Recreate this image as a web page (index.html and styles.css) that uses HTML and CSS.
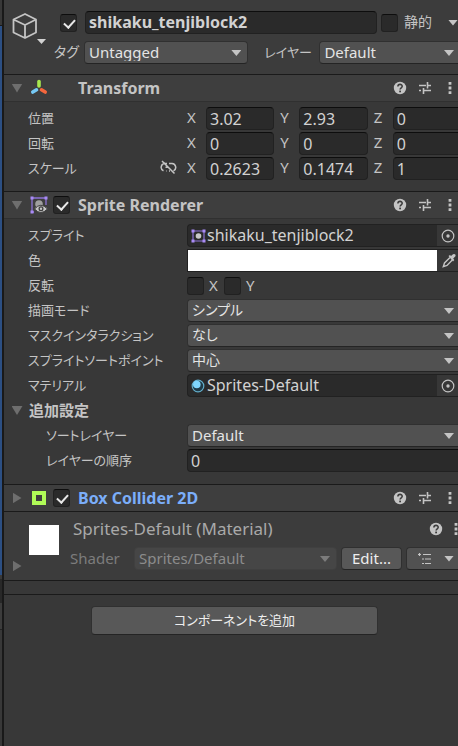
FILE: index.html
```html
<!DOCTYPE html>
<html lang="ja">
<head>
<meta charset="utf-8">
<meta name="viewport" content="width=device-width, initial-scale=1">
<title>Inspector</title>
<link rel="stylesheet" href="styles.css">
</head>
<body>
<svg class="defs" aria-hidden="true">
  <symbol id="help" viewBox="0 0 14 14"><circle cx="7" cy="7" r="6.2" fill="#c4c4c4"/><path d="M4.9 5.5C4.9 2.6 9.2 2.8 9.2 5.3C9.2 6.8 7.1 6.8 7.1 8.6" fill="none" stroke="#3c3c3c" stroke-width="1.6"/><rect x="6.2" y="9.6" width="1.8" height="1.7" fill="#3c3c3c"/></symbol>
  <symbol id="preset" viewBox="0 0 14 14"><path d="M1 4.5H8M10 4.5H13M9.500 1V7.500M1 9.500H3M6 9.500H13M5.500 7V13" fill="none" stroke="#c4c4c4" stroke-width="1.6"/></symbol>
  <symbol id="more" viewBox="0 0 4 14"><path d="M.6 1h2.8v2.8H.6zM.6 5.6h2.8v2.8H.6zM.6 10.2h2.8V13H.6z" fill="#c4c4c4"/></symbol>
  <symbol id="picker" viewBox="0 0 14 14"><circle cx="7" cy="7" r="5.8" fill="none" stroke="#c4c4c4" stroke-width="1.2"/><circle cx="7" cy="7" r="1.7" fill="#c4c4c4"/></symbol>
</svg>
<div class="window">
  <div class="edge"><i class="edge-top"></i><i class="edge-selected"></i><i class="edge-tabs"></i><i class="edge-bar"></i><i class="edge-body"></i></div>
  <main class="inspector">
    <header class="object">
      <button class="object-icon" aria-label="アイコンを選択">
        <svg width="34" height="34" viewBox="0 0 34 34"><path d="M13 3L24 8.500V21.500L13 27L1.500 21.500V8.500ZM1.500 8.500L13 14L24 8.500M13 14V27" fill="none" stroke="#c4c4c4" stroke-width="1.800" stroke-linejoin="round"/><path d="M25 28h9l-4.500 5z" fill="#d2d2d2"/></svg>
      </button>
      <div class="object-fields">
        <div class="object-row">
          <input class="check" type="checkbox" checked aria-label="アクティブ">
          <input class="field name" type="text" value="shikaku_tenjiblock2" aria-label="名前">
          <input class="check" type="checkbox" id="static">
          <label class="static-label" for="static">静的</label>
          <button class="caret-button" aria-label="静的オプション"></button>
        </div>
        <div class="object-row">
          <label class="tag-label" for="tag">タグ</label>
          <div class="select tag"><select id="tag"><option>Untagged</option></select></div>
          <label class="layer-label" for="layer">レイヤー</label>
          <div class="select layer bleed"><select id="layer"><option>Default</option></select></div>
        </div>
      </div>
    </header>

    <section>
      <div class="head">
        <button class="fold open" aria-label="折りたたむ"></button>
        <svg class="head-icon" width="18" height="18" viewBox="0 0 18 18"><path d="M9 2.500V7" stroke="#a8e84e" stroke-width="3.600" stroke-linecap="round"/><path d="M6.500 10.800L2.800 13" stroke="#76c9f5" stroke-width="3.600" stroke-linecap="round"/><path d="M11.500 10.800L15.200 13" stroke="#f5673d" stroke-width="3.600" stroke-linecap="round"/></svg>
        <span class="check-space"></span>
        <h2>Transform</h2>
        <button class="tool" aria-label="ヘルプ"><svg><use href="#help"/></svg></button><button class="tool" aria-label="プリセット"><svg><use href="#preset"/></svg></button><button class="tool more" aria-label="メニュー"><svg><use href="#more"/></svg></button>
      </div>
      <div class="body">
        <div class="row"><span class="label">位置</span><div class="axes">
          <label class="axis">X<input class="field" value="3.02"></label><label class="axis">Y<input class="field" value="2.93"></label><label class="axis">Z<input class="field" value="0"></label></div></div>
        <div class="row"><span class="label">回転</span><div class="axes">
          <label class="axis">X<input class="field" value="0"></label><label class="axis">Y<input class="field" value="0"></label><label class="axis">Z<input class="field" value="0"></label></div></div>
        <div class="row"><span class="label">スケール<button class="link" aria-label="比率を固定"><svg width="17" height="15" viewBox="0 0 17 15"><path d="M7 3.500H5A3.800 3.800 0 0 0 3.500 10.800M9 3.500H12A3.900 3.900 0 0 1 13.500 10.900M10 11H9M7 11H6.500M5.500 7.300H8M2 1L14.500 13.500" fill="none" stroke="#c4c4c4" stroke-width="1.500"/></svg></button></span><div class="axes">
          <label class="axis">X<input class="field" value="0.2623"></label><label class="axis">Y<input class="field" value="0.1474"></label><label class="axis">Z<input class="field" value="1"></label></div></div>
      </div>
    </section>

    <section>
      <div class="head">
        <button class="fold open" aria-label="折りたたむ"></button>
        <svg class="head-icon" width="18" height="18" viewBox="0 0 18 18"><path d="M2 2H16V9M2 2V16H4" fill="none" stroke="#8d73d6" stroke-width="1.300"/><path d="M.5.500h3v3h-3zM14.500.500h3v3h-3zM.5 14.500h3v3h-3z" fill="#a98bf5"/><circle cx="9" cy="8" r="3.800" fill="#a0a0a0"/><path d="M4.500 13Q10.800 5.500 17.500 13Q10.800 20 4.500 13Z" fill="#c4c4c4" stroke="#3e3e3e"/><circle cx="11" cy="12.800" r="2.500" fill="#3e3e3e"/><circle cx="11" cy="12.800" r="1.200" fill="#c4c4c4"/></svg>
        <input class="check" type="checkbox" checked aria-label="Sprite Renderer を有効化">
        <h2>Sprite Renderer</h2>
        <button class="tool" aria-label="ヘルプ"><svg><use href="#help"/></svg></button><button class="tool" aria-label="プリセット"><svg><use href="#preset"/></svg></button><button class="tool more" aria-label="メニュー"><svg><use href="#more"/></svg></button>
      </div>
      <div class="body long">
        <div class="row"><span class="label">スプライト</span><div class="object-ref"><svg width="15" height="14" viewBox="0 0 15 14"><path d="M2 2H13V12H2Z" fill="none" stroke="#8d73d6" stroke-width="1.200"/><path d="M.5.500h3v3h-3zM11.500.500h3v3h-3zM.5 10.500h3v3h-3zM11.500 10.500h3v3h-3z" fill="#a98bf5"/><circle cx="7.500" cy="7" r="2.800" fill="#c8c8c8"/></svg><span>shikaku_tenjiblock2</span><button class="pick" aria-label="スプライトを選択"><svg><use href="#picker"/></svg></button></div></div>
        <div class="row"><span class="label">色</span><div class="color"><button class="swatch" aria-label="色を選択"></button><button class="dropper" aria-label="スポイト"><svg width="14" height="15" viewBox="0 0 14 15"><path d="M8 4.500L2.500 10L1.300 13.700L5 12.500L10.300 7" fill="none" stroke="#c4c4c4" stroke-width="1.400"/><path d="M6.500 3L8 2L9 3L11 1.200Q12.500.500 13.300 1.500Q14 2.700 13 3.800L11.200 5.600L12.300 7L11 8.500Z" fill="#c4c4c4"/></svg></button></div></div>
        <div class="row"><span class="label">反転</span><div class="flip"><input class="check" type="checkbox" id="flipx"><label for="flipx">X</label><input class="check" type="checkbox" id="flipy"><label for="flipy">Y</label></div></div>
        <div class="row"><label class="label" for="mode">描画モード</label><div class="select bleed"><select class="kana" id="mode"><option>シンプル</option></select></div></div>
        <div class="row"><label class="label" for="mask">マスクインタラクション</label><div class="select bleed"><select class="kana" id="mask"><option>なし</option></select></div></div>
        <div class="row"><label class="label" for="point">スプライトソートポイント</label><div class="select bleed"><select class="kana" id="point"><option>中心</option></select></div></div>
        <div class="row"><span class="label">マテリアル</span><div class="object-ref"><svg width="15" height="14" viewBox="0 0 15 14"><circle cx="7" cy="7" r="5.800" fill="#1f3a47" stroke="#62aecb" stroke-width="1.200"/><circle cx="5.800" cy="5.500" r="3.800" fill="#7fd6fd"/></svg><span>Sprites-Default</span><button class="pick" aria-label="マテリアルを選択"><svg><use href="#picker"/></svg></button></div></div>
        <div class="row group"><button class="fold open" aria-label="折りたたむ"></button><h3>追加設定</h3></div>
        <div class="row"><label class="label nested" for="sort">ソートレイヤー</label><div class="select bleed"><select id="sort"><option>Default</option></select></div></div>
        <div class="row"><label class="label nested" for="order">レイヤーの順序</label><input class="field order" id="order" value="0"></div>
      </div>
    </section>

    <section>
      <div class="head closed">
        <button class="fold" aria-label="展開"></button>
        <svg class="head-icon" width="18" height="18" viewBox="0 0 18 18"><path d="M4 4H14V14H4Z" fill="none" stroke="#b0fb57" stroke-width="4"/></svg>
        <input class="check" type="checkbox" checked aria-label="Box Collider 2D を有効化">
        <h2 class="added">Box Collider 2D</h2>
        <button class="tool" aria-label="ヘルプ"><svg><use href="#help"/></svg></button><button class="tool" aria-label="プリセット"><svg><use href="#preset"/></svg></button><button class="tool more" aria-label="メニュー"><svg><use href="#more"/></svg></button>
      </div>
    </section>

    <section class="material">
      <div class="preview-column"><div class="preview"></div><button class="fold" aria-label="展開"></button></div>
      <div class="material-main">
        <div class="material-title"><h2>Sprites-Default (Material)</h2><button class="tool" aria-label="ヘルプ"><svg><use href="#help"/></svg></button><button class="tool more" aria-label="メニュー"><svg><use href="#more"/></svg></button></div>
        <div class="shader"><label for="shader">Shader</label><div class="select disabled"><select id="shader" disabled><option>Sprites/Default</option></select></div><button class="button">Edit...</button><button class="button list" aria-label="シェーダーメニュー"><svg width="14" height="12" viewBox="0 0 14 12"><path d="M0 1.500H3M1.500 0V3M5 1.500H13M4 6H6M7 6H13M4 10.500H6M7 10.500H13" fill="none" stroke="#c4c4c4" stroke-width="1.200"/></svg></button></div>
      </div>
    </section>

    <div class="divider"></div>
    <footer><button class="button add">コンポーネントを追加</button></footer>
  </main>
</div>
</body>
</html>
```
FILE: styles.css
```css
* { box-sizing: border-box; }

body {
  margin: 0;
  background: #383838;
  color: #c4c4c4;
  font: 15px/20px "Noto Sans", "Noto Sans CJK JP", sans-serif;
  font-feature-settings: "palt";
}

button, input, select {
  margin: 0;
  padding: 0;
  border: 0;
  background: none;
  color: inherit;
  font: inherit;
  font-feature-settings: inherit;
}

h2, h3 { margin: 0; }
h2 { font-size: 16px; }
h3 { font-size: 15px; }
svg { display: block; flex: none; }
.defs { position: absolute; width: 0; height: 0; }

.window { display: flex; min-height: 100vh; overflow: hidden; }
.edge { display: flex; flex-direction: column; flex: none; width: 4px; border-right: 2px solid #191919; }
.edge-top { height: 26px; background: #383838; border-bottom: 1px solid #191919; }
.edge-selected { height: 549px; background: #2c4f83; }
.edge-tabs { height: 28px; background: #282828; border-top: 4px solid #383838; }
.edge-bar { height: 27px; background: #3c3c3c; border-bottom: 1px solid #232323; }
.edge-body { flex: 1; background: #383838; }
.inspector { flex: 1; min-width: 0; overflow: hidden; }

/* Shared controls */
.field {
  min-width: 0;
  height: 23px;
  padding: 0 3px;
  border: 1px solid #212121;
  border-top-color: #0d0d0d;
  border-radius: 4px;
  background: #2a2a2a;
  color: #d2d2d2;
  font-size: 16px;
}

.check {
  flex: none;
  width: 17px;
  height: 18px;
  border: 1px solid #212121;
  border-top-color: #0d0d0d;
  border-radius: 3px;
  background: #2a2a2a;
  appearance: none;
}
.check:checked::before {
  content: "";
  display: block;
  width: 5px;
  height: 9px;
  margin: 2px 0 0 5px;
  border: solid #e8e8e8;
  border-width: 0 2px 2px 0;
  transform: rotate(42deg);
}

.select {
  position: relative;
  flex: 1;
  min-width: 0;
  height: 23px;
  border: 1px solid #303030;
  border-bottom-color: #242424;
  border-radius: 4px;
  background: #515151;
  color: #e4e4e4;
}
.select::after, .caret-button::before, .list::after {
  content: "";
  width: 10px;
  height: 6px;
  background: #c4c4c4;
  clip-path: polygon(0 0, 100% 0, 50% 100%);
}
.select::after { position: absolute; top: 8px; right: 6px; pointer-events: none; }
.select.bleed::after { right: 4px; }
.select select { display: block; width: 100%; height: 21px; padding: 0 20px 2px 4px; appearance: none; opacity: 1; }
.select .kana { font-size: 14px; }
.bleed { border-right: 0; border-radius: 4px 0 0 4px; }

.button {
  height: 23px;
  padding-bottom: 2px;
  border: 1px solid #303030;
  border-bottom-color: #242424;
  border-radius: 4px;
  background: #585858;
  color: #eeeeee;
}

.fold { display: flex; align-items: center; justify-content: center; flex: none; width: 14px; height: 20px; }
.fold::before { content: ""; width: 9px; height: 11px; background: #6e6e6e; clip-path: polygon(0 0, 100% 50%, 0 100%); }
.fold.open::before { width: 11px; height: 9px; clip-path: polygon(0 0, 100% 0, 50% 100%); }

/* Game object */
.object { display: flex; height: 74px; padding-top: 11px; background: #3c3c3c; }
.object-icon { align-self: flex-start; width: 50px; padding-left: 8px; }
.object-fields { display: flex; flex: 1; flex-direction: column; gap: 7px; min-width: 0; }
.object-row { display: flex; align-items: center; height: 23px; }
.object-row .check:first-child { margin: 0 8px 0 6px; }
.name { flex: 1; margin-right: 4px; padding-bottom: 2px; font-weight: bold; }
.static-label, .tag-label, .layer-label { padding-bottom: 2px; font-size: 14px; }
.static-label { width: 45px; padding-left: 6px; }
.caret-button { width: 15px; padding-left: 5px; }
.caret-button::before { display: block; }
.tag-label { width: 30px; }
.select.tag { flex: 164; }
.select.layer { flex: 139; }
.layer-label { width: 71px; padding-left: 16px; font-size: 13px; }

/* Component header */
.head {
  display: flex;
  align-items: center;
  height: 28px;
  padding-left: 6px;
  border-top: 1px solid #1a1a1a;
  border-bottom: 1px solid #303030;
  background: #3e3e3e;
}
.head.closed { border-bottom-color: #1a1a1a; }
.head-icon { margin: 0 6px; margin-right: 5px; }
.check-space { width: 17px; }
.head h2 { flex: 1; padding-left: 8px; }
.head .added { color: #7baefa; }
.tool { flex: none; width: 25px; }
.tool svg { width: 14px; height: 14px; margin: 0 auto; }
.tool.more { width: 21px; }
.tool.more svg { width: 4px; margin-left: 11px; }

/* Properties */
.body { padding: 4px 0 10px; }
.body.long { padding-bottom: 11px; }
.row { display: flex; align-items: center; height: 25px; }
.label { display: flex; align-items: center; justify-content: space-between; flex: none; width: 183px; padding: 0 0 2px 24px; font-size: 13px; }
.label.nested { padding-left: 42px; }
.link { width: 17px; margin-right: 10px; }
.axes { display: grid; grid-template-columns: repeat(3, 1fr); gap: 6px; flex: 1; min-width: 0; margin-right: -3px; }
.axis { display: grid; grid-template-columns: 19px 1fr; min-width: 0; }
.axis .field { width: 100%; }
.object-ref { display: flex; align-items: center; flex: 1; height: 23px; border: 1px solid #212121; border-right: 0; border-radius: 4px 0 0 4px; background: #2a2a2a; color: #d2d2d2; padding-left: 3px; }
.object-ref span { flex: 1; padding: 0 0 1px 1px; font-size: 16px; }
.pick { height: 21px; width: 21px; background: #373737; }
.pick svg { width: 14px; height: 14px; margin: 0 auto; }
.color { display: flex; flex: 1; height: 23px; border: 1px solid #212121; border-right: 0; }
.swatch { flex: 1; background: #ffffff; }
.dropper { width: 21px; padding-left: 5px; }
.flip { display: flex; align-items: center; }
.flip label { width: 20px; padding: 0 0 2px 5px; }
.group { padding-left: 6px; }
.group h3 { padding: 0 0 2px 5px; }
.order { flex: 1; border-right: 0; border-radius: 4px 0 0 4px; }

/* Material */
.material { display: flex; height: 68px; background: #3c3c3c; }
.preview-column { width: 66px; padding: 13px 0 0 6px; }
.preview { width: 30px; height: 30px; margin-left: 19px; background: #ffffff; }
.preview-column .fold { margin-top: 1px; }
.material-main { flex: 1; min-width: 0; padding-top: 4px; }
.material-title { display: flex; align-items: center; height: 25px; padding-left: 3px; color: #a9a9a9; }
.material-title h2 { flex: 1; font-size: 17px; font-weight: normal; }
.material-title .more { width: 10px; }
.material-title .more svg { margin-left: 6px; }
.shader { display: flex; align-items: center; height: 23px; margin-top: 6px; color: #7c7c7c; }
.shader label { width: 64px; padding-bottom: 2px; }
.disabled { background: #464646; border-color: #404040; color: #8c8c8c; }
.disabled::after { background: #7c7c7c; }
.shader .button { width: 61px; margin-left: 4px; }
.shader .list { display: flex; align-items: center; justify-content: space-between; width: 52px; padding: 0 4px 0 11px; border-right: 0; border-radius: 4px 0 0 4px; background: #515151; }

.divider { height: 15px; border: solid #1a1a1a; border-width: 1px 0; }
footer { display: flex; justify-content: center; padding: 11px 0 11px 7px; }
.add { width: 64%; height: 29px; font-size: 13px; }
```
